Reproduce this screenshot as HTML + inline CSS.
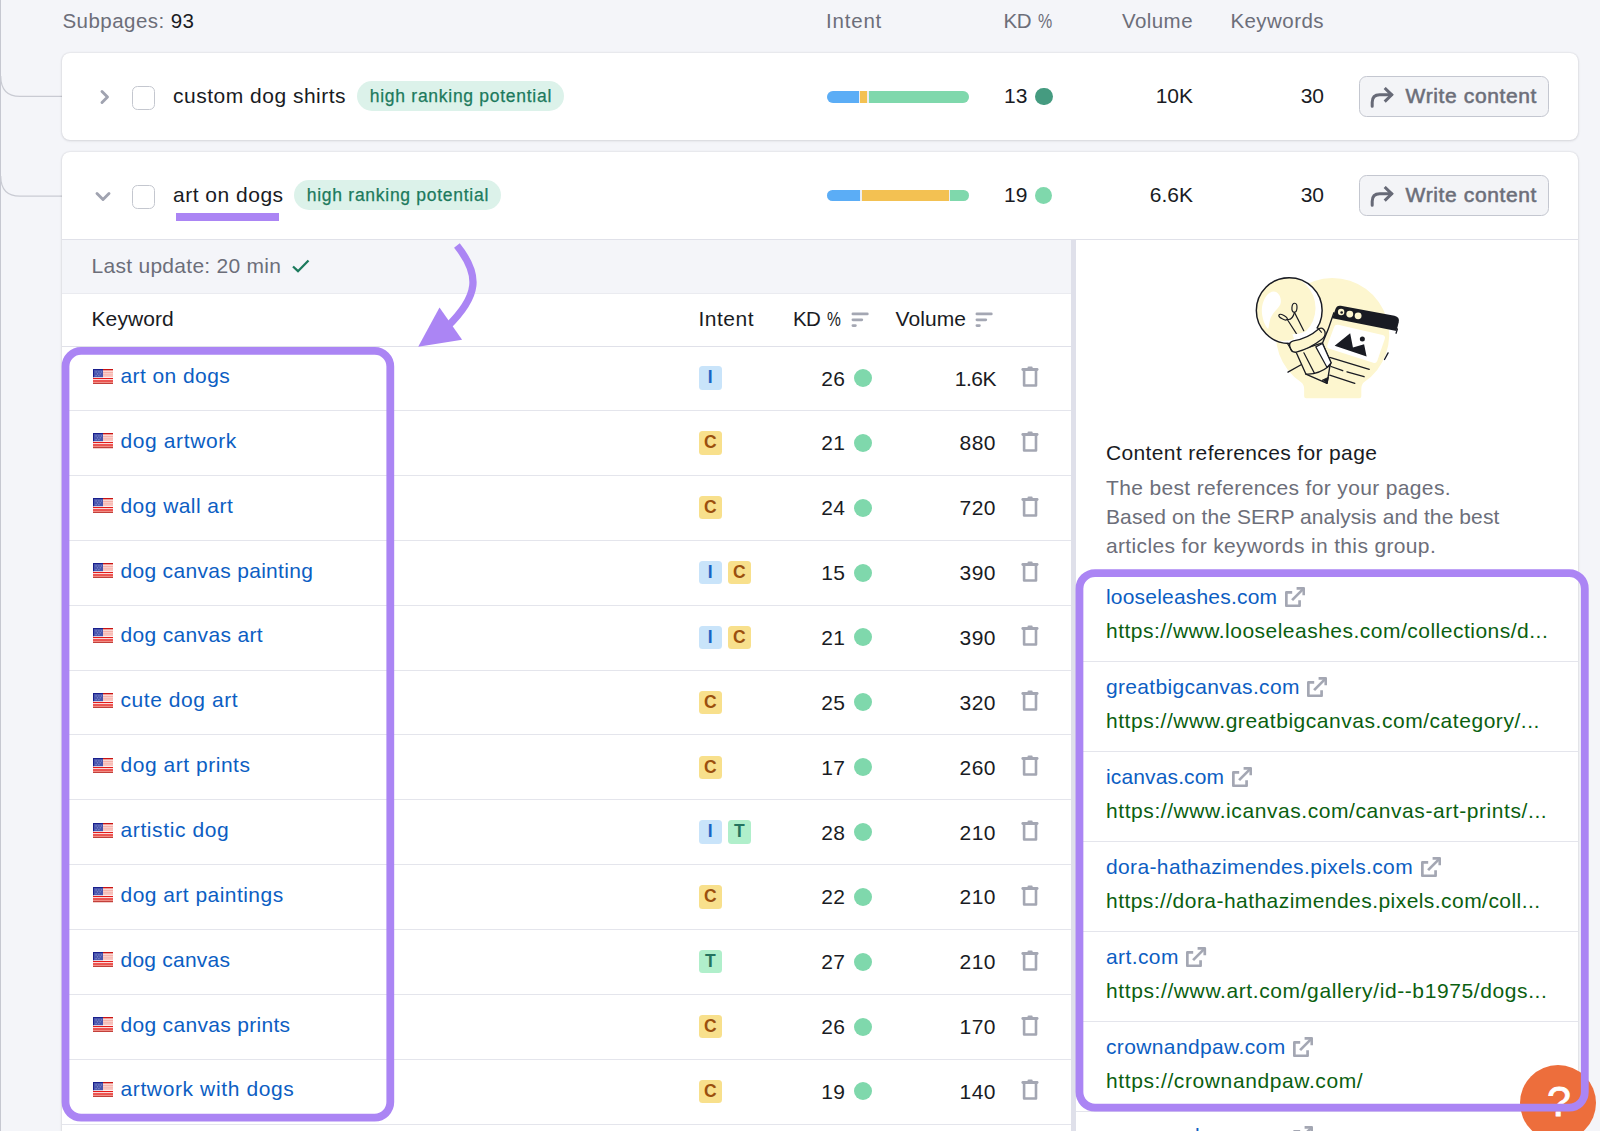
<!DOCTYPE html>
<html lang="en"><head><meta charset="utf-8"><title>Subpages</title>
<style>
*{box-sizing:border-box;margin:0;padding:0}
html,body{width:1600px;height:1131px;overflow:hidden}
body{background:#f4f5f9;font-family:"Liberation Sans",Arial,sans-serif;font-size:21px;color:#191b23;position:relative;letter-spacing:.3px}
.abs{position:absolute;white-space:nowrap}
.gray{color:#6c6e79}
.hdr{top:9px;line-height:24px;font-size:20.5px;letter-spacing:.45px}
.card{position:absolute;left:62px;width:1516px;background:#fff;border-radius:8px;box-shadow:0 0 2px rgba(25,27,35,.16),0 1px 3px rgba(25,27,35,.10)}
.chk{position:absolute;left:132px;width:22.8px;height:23.5px;border:1.3px solid #c4c7cf;border-radius:5.5px;background:#fff}
.title{position:absolute;left:173px;line-height:26px;letter-spacing:.5px}
.tag{position:absolute;height:30px;border-radius:15px;background:#dcf2ea;color:#1c7a5d;font-size:17.5px;line-height:30px;padding:0 0 0 12.8px;width:207px;letter-spacing:.72px;font-weight:400;-webkit-text-stroke:.25px #1c7a5d}
.bar{position:absolute;left:826.7px;width:142.3px;height:12px;border-radius:6px;overflow:hidden;display:flex;gap:1.6px;background:#eceef2}
.bar i{display:block;height:12.5px}
.num{position:absolute;line-height:26px;text-align:right;letter-spacing:0}
.dot{position:absolute;width:18px;height:18px;border-radius:50%;background:#7fd8ac}
.btn{position:absolute;left:1359px;width:190px;height:41px;border:1.3px solid #c4c7d0;border-radius:7.5px;background:#f3f4f7;color:#6c6e79;font-weight:400;letter-spacing:.62px;-webkit-text-stroke:.55px #6c6e79}
.btn span{position:absolute;left:45.6px;top:6.2px;line-height:26px;font-size:21px}
.btn svg{position:absolute;left:10px;top:9.5px}

.panelhead{position:absolute;left:62px;top:239px;width:1516px;height:1px;background:#e0e1e9}
.lastupd{position:absolute;left:62px;top:240px;width:1009px;height:53.6px;background:#f4f5f9;border-bottom:1px solid #eaebf0}
.lastupd span{position:absolute;left:29.5px;top:13px;line-height:26px;color:#6c6e79;letter-spacing:.28px}
.divider{position:absolute;left:1071px;top:240px;width:5px;height:900px;background:#dfe0ea}
.th{position:absolute;top:306px;line-height:26px;letter-spacing:.1px}
.thline{position:absolute;left:62px;top:346px;width:1009px;height:1px;background:#e0e1e9}
.row{position:absolute;left:62px;width:1009px;height:64.8px;border-bottom:1.2px solid #e4e5ec}
.row .flag{position:absolute;left:31px;top:22.2px}
.row .kw{position:absolute;left:58.5px;top:16.5px;line-height:26px;color:#0c5ec3;letter-spacing:.33px}
.in{position:absolute;top:20.1px;width:22.5px;height:23.2px;border-radius:3.5px;font-size:17.5px;line-height:23.6px;text-align:center;font-weight:700;letter-spacing:0}
.inI{background:#c9e4fa;color:#1a63c4}
.inC{background:#f8e08c;color:#9b4f0e}
.inT{background:#b0efcb;color:#24735e}
.kd{position:absolute;right:225.5px;top:19.2px;line-height:26px;letter-spacing:.5px;text-align:right}
.kdot{position:absolute;left:792px;top:22.6px;width:18px;height:18px;border-radius:50%;background:#7fd8ac}
.vol{position:absolute;right:75px;top:19.2px;line-height:26px;letter-spacing:.5px;text-align:right}
.trash{position:absolute;left:958.8px;top:19.5px}
.ref{position:absolute;left:1076px;width:502px;height:90px;border-bottom:1.2px solid #e4e5ec}
.ref .dl{position:absolute;left:30px;top:11.8px;height:26px;display:flex;align-items:flex-start}
.ref .dom{line-height:26px;color:#0c5ec3;letter-spacing:.2px}
.ref .ext{margin-left:7.6px;margin-top:3.1px}
.ref .url{position:absolute;left:30px;top:45.9px;line-height:26px;color:#0b5f10;letter-spacing:.48px}
.rt{position:absolute;left:1106px;line-height:29px;letter-spacing:.35px}
</style></head><body>

<!-- tree connectors -->
<div class="abs" style="left:.2px;top:0;width:1.1px;height:1131px;background:#c6c8d1"></div>
<svg class="abs" style="left:0;top:0" width="70" height="260" viewBox="0 0 70 260" fill="none" stroke="#c9cbd3" stroke-width="1.2">
<path d="M.75 76Q.75 96.4 20 96.4H62"/><path d="M.75 176Q.75 196.2 20 196.2H62"/>
</svg>

<div class="abs gray hdr" style="left:62.5px">Subpages: <span style="color:#191b23">93</span></div>
<div class="abs gray hdr" style="left:826px;letter-spacing:.8px">Intent</div>
<div class="abs gray hdr" style="left:1003.5px;letter-spacing:-.3px">KD <span style="display:inline-block;transform:scaleX(.78);transform-origin:0 50%;letter-spacing:0;margin-left:1.3px">%</span></div>
<div class="abs gray hdr" style="right:407px">Volume</div>
<div class="abs gray hdr" style="right:276px">Keywords</div>

<!-- card 1 -->
<div class="card" style="top:53px;height:87px"></div>
<svg class="abs" style="left:97px;top:85.5px" width="16" height="22" viewBox="0 0 16 22" fill="none" stroke="#a0a3b0" stroke-width="2.9" stroke-linecap="round" stroke-linejoin="round"><path d="M5 5.5l5.5 5.5L5 16.5"/></svg>
<div class="chk" style="top:86.3px"></div>
<div class="title" style="top:83px">custom dog shirts</div>
<div class="tag" style="left:357px;top:81.2px">high ranking potential</div>
<div class="bar" style="top:90.7px"><i style="width:32.2px;background:#5badf6"></i><i style="width:6.6px;background:#f3c152"></i><i style="flex:1;background:#7fd8ac"></i></div>
<div class="num" style="left:1004px;top:83px">13</div>
<div class="dot" style="left:1035px;top:87.6px;width:17.6px;height:17.6px;background:#459b80"></div>
<div class="num" style="right:407px;top:83px">10K</div>
<div class="num" style="right:276px;top:83px">30</div>
<div class="btn" style="top:76px"><svg width="26" height="22" viewBox="0 0 26 22" fill="none" stroke="#676a77" stroke-width="3"><path d="M2.2 19.2V15.3Q2.2 7.8 9.7 7.8H21.5" stroke-linecap="round"/><path d="M14.7 1L21.7 7.8L14.7 14.6" stroke-linejoin="miter"/></svg><span>Write content</span></div>

<!-- card 2 -->
<div class="card" style="top:152px;height:1000px"></div>
<svg class="abs" style="left:92.8px;top:186.3px" width="22" height="20" viewBox="0 0 22 20" fill="none" stroke="#a0a3b0" stroke-width="2.9" stroke-linecap="round" stroke-linejoin="round"><path d="M4 7.5l6 6 6-6"/></svg>
<div class="chk" style="top:185.2px"></div>
<div class="title" style="top:182px">art on dogs</div>
<div class="abs" style="left:176px;top:213.2px;width:103px;height:8px;background:#ab85f4"></div>
<div class="tag" style="left:294px;top:180.2px">high ranking potential</div>
<div class="bar" style="top:189.8px;height:11.4px"><i style="width:33.8px;background:#5badf6"></i><i style="width:86.8px;background:#f3c152"></i><i style="flex:1;background:#7fd8ac"></i></div>
<div class="num" style="left:1004px;top:182px">19</div>
<div class="dot" style="left:1035px;top:187px;width:17.4px;height:17.4px"></div>
<div class="num" style="right:407px;top:182px">6.6K</div>
<div class="num" style="right:276px;top:182px">30</div>
<div class="btn" style="top:175px"><svg width="26" height="22" viewBox="0 0 26 22" fill="none" stroke="#676a77" stroke-width="3"><path d="M2.2 19.2V15.3Q2.2 7.8 9.7 7.8H21.5" stroke-linecap="round"/><path d="M14.7 1L21.7 7.8L14.7 14.6" stroke-linejoin="miter"/></svg><span>Write content</span></div>


<!-- expanded panel -->
<div class="panelhead"></div>
<div class="lastupd"><span>Last update: 20 min</span>
<svg class="abs" style="left:229px;top:18px" width="20" height="16" viewBox="0 0 20 16" fill="none" stroke="#1c7a5d" stroke-width="2.3" stroke-linecap="butt" stroke-linejoin="miter"><path d="M2 8.5l5 4.7L17.5 2.5"/></svg></div>
<div class="divider"></div>
<div class="th" style="left:91.5px">Keyword</div>
<div class="th" style="left:698.5px;letter-spacing:.5px">Intent</div>
<div class="th" style="left:793px;letter-spacing:-.75px;font-size:20.5px">KD <span style="display:inline-block;transform:scaleX(.76);transform-origin:0 50%;letter-spacing:0;margin-left:2px">%</span></div>
<svg class="abs" style="left:851px;top:311.9px" width="19" height="16" viewBox="0 0 19 16" fill="none" stroke="#a4a7b3" stroke-width="2.75" stroke-linecap="round"><path d="M1.9 1.9H16.3M1.9 7.8H10.8M1.9 13.5H4.4"/></svg>
<div class="th" style="left:895.5px">Volume</div>
<svg class="abs" style="left:974.5px;top:311.9px" width="19" height="16" viewBox="0 0 19 16" fill="none" stroke="#a4a7b3" stroke-width="2.75" stroke-linecap="round"><path d="M1.9 1.9H16.3M1.9 7.8H10.8M1.9 13.5H4.4"/></svg>
<div class="thline"></div>

<!-- right panel -->
<div class="rt" style="top:438px;color:#191b23;letter-spacing:.36px">Content references for page</div>
<div class="rt gray" style="top:472.5px">The best references for your pages.</div>
<div class="rt gray" style="top:501.5px;letter-spacing:.1px">Based on the SERP analysis and the best</div>
<div class="rt gray" style="top:530.5px">articles for keywords in this group.</div>
<!-- ILLUS --><svg class="abs" style="left:1230px;top:260px" width="200" height="150" viewBox="0 0 1508 1131">
<defs><clipPath id="bulbclip"><circle cx="446.6" cy="381.4" r="248"/></clipPath></defs>
<g stroke-linecap="round" stroke-linejoin="round">
<path d="M770 135A430 430 0 0 1 1010 922Q990 940 990 975V1028Q990 1043 975 1043H574Q559 1043 559 1028V975Q559 940 536 922A430 430 0 0 1 770 135Z" fill="#fdf6cf"/>
<!-- browser window -->
<path d="M835 345L1240 420Q1282 430 1272 470L1255 535L772 440L795 370Q805 340 835 345Z" fill="#191b23"/>
<circle cx="838" cy="392" r="24" fill="#fdf6cf"/><circle cx="903" cy="408" r="26" fill="#fdf6cf"/><circle cx="966" cy="421" r="26" fill="#fdf6cf"/>
<circle cx="842" cy="396" r="10" fill="#191b23"/>
<path d="M815 488L1150 565Q1175 572 1167 595L1110 762Q1102 782 1080 775L745 668Q728 660 735 640L785 505Q793 484 815 488Z" fill="#fff"/>
<path d="M789 647L906 552L927 660L1011 635L1030 728Z" fill="#191b23"/>
<circle cx="998" cy="595" r="19" fill="#191b23"/>
<g fill="none" stroke="#191b23" stroke-width="10">
<path d="M783 398Q745 520 698 625"/>
<path d="M1262 520L1252 552"/><path d="M1192 700L1165 750"/>
<path d="M752 735L1050 825"/><path d="M762 803L850 835"/><path d="M882 843L1011 880"/><path d="M752 868L941 930"/>
<path d="M437 845L536 790"/>
</g>
<!-- bulb -->
<circle cx="446.6" cy="381.4" r="248" fill="#fff"/>
<g clip-path="url(#bulbclip)"><circle cx="396" cy="362" r="249" fill="#fdf6cf"/>
<path d="M328 238C365 238 388 280 383 320C378 360 330 380 305 440C295 470 295 500 288 520C262 500 238 430 240 375C242 310 280 240 328 238Z" fill="#fff"/></g>
<circle cx="446.6" cy="381.4" r="248" fill="none" stroke="#191b23" stroke-width="11"/>
<g fill="none" stroke="#191b23" stroke-width="9">
<ellipse cx="486" cy="360" rx="19" ry="34" transform="rotate(4 486 360)"/>
<ellipse cx="400" cy="431" rx="35" ry="14" transform="rotate(28 400 431)"/>
<path d="M433 448Q470 455 486 396"/>
<path d="M486 395L556 533"/><path d="M432 449L520 585"/>
<path d="M506 582L571 555"/>
</g>
<!-- pencil -->
<path d="M496 690L696 625L762 775L754 795L732 930L572 860Z" fill="#fdf6cf" stroke="#191b23" stroke-width="10"/>
<path d="M647 655L697 630L762 775L732 810Z" fill="#fff" stroke="#191b23" stroke-width="9"/>
<path d="M557 700L637 855" fill="none" stroke="#191b23" stroke-width="9"/>
<path d="M572 860Q660 868 754 795" fill="none" stroke="#191b23" stroke-width="10"/>
<path d="M697 905L742 885L732 930Z" fill="#191b23" stroke="#191b23" stroke-width="6"/>
<!-- collar -->
<path d="M470 560Q560 560 640 500L690 560Q600 640 500 640Z" fill="#fff"/>
<path d="M452 655Q440 620 478 610Q590 590 668 520Q700 500 716 540Q724 575 690 600Q600 670 500 695Q462 700 452 655Z" fill="#fdf6cf" stroke="#191b23" stroke-width="10"/>
<path d="M432 628L470 690" fill="none" stroke="#191b23" stroke-width="9"/>
<path d="M660 510L690 545" fill="none" stroke="#191b23" stroke-width="8"/>
</g></svg>
<!-- /ILLUS -->
<div class="row" style="top:346.4px"><svg class="flag" width="20" height="15.2" viewBox="0 0 20 15.2"><rect width="20" height="15.2" fill="#f5aaa3"/><rect width="20" height="1.1" fill="#c81414"/><g fill="#fbe3e0"><rect y="2.2" width="20" height=".9"/><rect y="4.4" width="20" height=".9"/><rect y="6.6" width="20" height=".9"/></g><rect y="8.2" width="20" height="1" fill="#fff"/><rect y="9.1" width="20" height="1.2" fill="#e30a0a"/><rect y="10.3" width="20" height="1.1" fill="#fff"/><rect y="11.4" width="20" height="1.3" fill="#e30a0a"/><rect y="12.7" width="20" height="1.3" fill="#f09089"/><rect y="14" width="20" height="1.2" fill="#c2403a"/><rect width="10" height="8.2" fill="#4a56ad"/><path d="M0 0h10v1H1v7.2H0z" fill="#1a1f8c"/><g fill="#7e88cc"><rect x="2.5" y="2.3" width="1.2" height="1.2"/><rect x="5.3" y="2.3" width="1.2" height="1.2"/><rect x="7.8" y="2.3" width="1.2" height="1.2"/><rect x="3.9" y="4.2" width="1.2" height="1.2"/><rect x="6.6" y="4.2" width="1.2" height="1.2"/><rect x="2.5" y="6" width="1.2" height="1.2"/><rect x="5.3" y="6" width="1.2" height="1.2"/></g></svg><a class="kw" style="letter-spacing:0.42px">art on dogs</a><b class="in inI" style="left:637px">I</b><span class="kd">26</span><i class="kdot"></i><span class="vol" style="letter-spacing:-.5px">1.6K</span><svg class="trash" width="18" height="22" viewBox="0 0 18 22" fill="none" stroke="#a4a7b3" stroke-width="2.6" stroke-linejoin="round" stroke-linecap="round"><path d="M3.1 4V19.5H15V4"/><path d="M1.8 3.5H16.1" stroke-width="2.8"/><path d="M7.6 1.7H10.6" stroke-width="2.2"/></svg></div>
<div class="row" style="top:411.3px"><svg class="flag" width="20" height="15.2" viewBox="0 0 20 15.2"><rect width="20" height="15.2" fill="#f5aaa3"/><rect width="20" height="1.1" fill="#c81414"/><g fill="#fbe3e0"><rect y="2.2" width="20" height=".9"/><rect y="4.4" width="20" height=".9"/><rect y="6.6" width="20" height=".9"/></g><rect y="8.2" width="20" height="1" fill="#fff"/><rect y="9.1" width="20" height="1.2" fill="#e30a0a"/><rect y="10.3" width="20" height="1.1" fill="#fff"/><rect y="11.4" width="20" height="1.3" fill="#e30a0a"/><rect y="12.7" width="20" height="1.3" fill="#f09089"/><rect y="14" width="20" height="1.2" fill="#c2403a"/><rect width="10" height="8.2" fill="#4a56ad"/><path d="M0 0h10v1H1v7.2H0z" fill="#1a1f8c"/><g fill="#7e88cc"><rect x="2.5" y="2.3" width="1.2" height="1.2"/><rect x="5.3" y="2.3" width="1.2" height="1.2"/><rect x="7.8" y="2.3" width="1.2" height="1.2"/><rect x="3.9" y="4.2" width="1.2" height="1.2"/><rect x="6.6" y="4.2" width="1.2" height="1.2"/><rect x="2.5" y="6" width="1.2" height="1.2"/><rect x="5.3" y="6" width="1.2" height="1.2"/></g></svg><a class="kw" style="letter-spacing:0.607px">dog artwork</a><b class="in inC" style="left:637px">C</b><span class="kd">21</span><i class="kdot"></i><span class="vol">880</span><svg class="trash" width="18" height="22" viewBox="0 0 18 22" fill="none" stroke="#a4a7b3" stroke-width="2.6" stroke-linejoin="round" stroke-linecap="round"><path d="M3.1 4V19.5H15V4"/><path d="M1.8 3.5H16.1" stroke-width="2.8"/><path d="M7.6 1.7H10.6" stroke-width="2.2"/></svg></div>
<div class="row" style="top:476.1px"><svg class="flag" width="20" height="15.2" viewBox="0 0 20 15.2"><rect width="20" height="15.2" fill="#f5aaa3"/><rect width="20" height="1.1" fill="#c81414"/><g fill="#fbe3e0"><rect y="2.2" width="20" height=".9"/><rect y="4.4" width="20" height=".9"/><rect y="6.6" width="20" height=".9"/></g><rect y="8.2" width="20" height="1" fill="#fff"/><rect y="9.1" width="20" height="1.2" fill="#e30a0a"/><rect y="10.3" width="20" height="1.1" fill="#fff"/><rect y="11.4" width="20" height="1.3" fill="#e30a0a"/><rect y="12.7" width="20" height="1.3" fill="#f09089"/><rect y="14" width="20" height="1.2" fill="#c2403a"/><rect width="10" height="8.2" fill="#4a56ad"/><path d="M0 0h10v1H1v7.2H0z" fill="#1a1f8c"/><g fill="#7e88cc"><rect x="2.5" y="2.3" width="1.2" height="1.2"/><rect x="5.3" y="2.3" width="1.2" height="1.2"/><rect x="7.8" y="2.3" width="1.2" height="1.2"/><rect x="3.9" y="4.2" width="1.2" height="1.2"/><rect x="6.6" y="4.2" width="1.2" height="1.2"/><rect x="2.5" y="6" width="1.2" height="1.2"/><rect x="5.3" y="6" width="1.2" height="1.2"/></g></svg><a class="kw" style="letter-spacing:0.442px">dog wall art</a><b class="in inC" style="left:637px">C</b><span class="kd">24</span><i class="kdot"></i><span class="vol">720</span><svg class="trash" width="18" height="22" viewBox="0 0 18 22" fill="none" stroke="#a4a7b3" stroke-width="2.6" stroke-linejoin="round" stroke-linecap="round"><path d="M3.1 4V19.5H15V4"/><path d="M1.8 3.5H16.1" stroke-width="2.8"/><path d="M7.6 1.7H10.6" stroke-width="2.2"/></svg></div>
<div class="row" style="top:541.0px"><svg class="flag" width="20" height="15.2" viewBox="0 0 20 15.2"><rect width="20" height="15.2" fill="#f5aaa3"/><rect width="20" height="1.1" fill="#c81414"/><g fill="#fbe3e0"><rect y="2.2" width="20" height=".9"/><rect y="4.4" width="20" height=".9"/><rect y="6.6" width="20" height=".9"/></g><rect y="8.2" width="20" height="1" fill="#fff"/><rect y="9.1" width="20" height="1.2" fill="#e30a0a"/><rect y="10.3" width="20" height="1.1" fill="#fff"/><rect y="11.4" width="20" height="1.3" fill="#e30a0a"/><rect y="12.7" width="20" height="1.3" fill="#f09089"/><rect y="14" width="20" height="1.2" fill="#c2403a"/><rect width="10" height="8.2" fill="#4a56ad"/><path d="M0 0h10v1H1v7.2H0z" fill="#1a1f8c"/><g fill="#7e88cc"><rect x="2.5" y="2.3" width="1.2" height="1.2"/><rect x="5.3" y="2.3" width="1.2" height="1.2"/><rect x="7.8" y="2.3" width="1.2" height="1.2"/><rect x="3.9" y="4.2" width="1.2" height="1.2"/><rect x="6.6" y="4.2" width="1.2" height="1.2"/><rect x="2.5" y="6" width="1.2" height="1.2"/><rect x="5.3" y="6" width="1.2" height="1.2"/></g></svg><a class="kw" style="letter-spacing:0.31px">dog canvas painting</a><b class="in inI" style="left:637px">I</b><b class="in inC" style="left:666px">C</b><span class="kd">15</span><i class="kdot"></i><span class="vol">390</span><svg class="trash" width="18" height="22" viewBox="0 0 18 22" fill="none" stroke="#a4a7b3" stroke-width="2.6" stroke-linejoin="round" stroke-linecap="round"><path d="M3.1 4V19.5H15V4"/><path d="M1.8 3.5H16.1" stroke-width="2.8"/><path d="M7.6 1.7H10.6" stroke-width="2.2"/></svg></div>
<div class="row" style="top:605.8px"><svg class="flag" width="20" height="15.2" viewBox="0 0 20 15.2"><rect width="20" height="15.2" fill="#f5aaa3"/><rect width="20" height="1.1" fill="#c81414"/><g fill="#fbe3e0"><rect y="2.2" width="20" height=".9"/><rect y="4.4" width="20" height=".9"/><rect y="6.6" width="20" height=".9"/></g><rect y="8.2" width="20" height="1" fill="#fff"/><rect y="9.1" width="20" height="1.2" fill="#e30a0a"/><rect y="10.3" width="20" height="1.1" fill="#fff"/><rect y="11.4" width="20" height="1.3" fill="#e30a0a"/><rect y="12.7" width="20" height="1.3" fill="#f09089"/><rect y="14" width="20" height="1.2" fill="#c2403a"/><rect width="10" height="8.2" fill="#4a56ad"/><path d="M0 0h10v1H1v7.2H0z" fill="#1a1f8c"/><g fill="#7e88cc"><rect x="2.5" y="2.3" width="1.2" height="1.2"/><rect x="5.3" y="2.3" width="1.2" height="1.2"/><rect x="7.8" y="2.3" width="1.2" height="1.2"/><rect x="3.9" y="4.2" width="1.2" height="1.2"/><rect x="6.6" y="4.2" width="1.2" height="1.2"/><rect x="2.5" y="6" width="1.2" height="1.2"/><rect x="5.3" y="6" width="1.2" height="1.2"/></g></svg><a class="kw" style="letter-spacing:0.331px">dog canvas art</a><b class="in inI" style="left:637px">I</b><b class="in inC" style="left:666px">C</b><span class="kd">21</span><i class="kdot"></i><span class="vol">390</span><svg class="trash" width="18" height="22" viewBox="0 0 18 22" fill="none" stroke="#a4a7b3" stroke-width="2.6" stroke-linejoin="round" stroke-linecap="round"><path d="M3.1 4V19.5H15V4"/><path d="M1.8 3.5H16.1" stroke-width="2.8"/><path d="M7.6 1.7H10.6" stroke-width="2.2"/></svg></div>
<div class="row" style="top:670.7px"><svg class="flag" width="20" height="15.2" viewBox="0 0 20 15.2"><rect width="20" height="15.2" fill="#f5aaa3"/><rect width="20" height="1.1" fill="#c81414"/><g fill="#fbe3e0"><rect y="2.2" width="20" height=".9"/><rect y="4.4" width="20" height=".9"/><rect y="6.6" width="20" height=".9"/></g><rect y="8.2" width="20" height="1" fill="#fff"/><rect y="9.1" width="20" height="1.2" fill="#e30a0a"/><rect y="10.3" width="20" height="1.1" fill="#fff"/><rect y="11.4" width="20" height="1.3" fill="#e30a0a"/><rect y="12.7" width="20" height="1.3" fill="#f09089"/><rect y="14" width="20" height="1.2" fill="#c2403a"/><rect width="10" height="8.2" fill="#4a56ad"/><path d="M0 0h10v1H1v7.2H0z" fill="#1a1f8c"/><g fill="#7e88cc"><rect x="2.5" y="2.3" width="1.2" height="1.2"/><rect x="5.3" y="2.3" width="1.2" height="1.2"/><rect x="7.8" y="2.3" width="1.2" height="1.2"/><rect x="3.9" y="4.2" width="1.2" height="1.2"/><rect x="6.6" y="4.2" width="1.2" height="1.2"/><rect x="2.5" y="6" width="1.2" height="1.2"/><rect x="5.3" y="6" width="1.2" height="1.2"/></g></svg><a class="kw" style="letter-spacing:0.558px">cute dog art</a><b class="in inC" style="left:637px">C</b><span class="kd">25</span><i class="kdot"></i><span class="vol">320</span><svg class="trash" width="18" height="22" viewBox="0 0 18 22" fill="none" stroke="#a4a7b3" stroke-width="2.6" stroke-linejoin="round" stroke-linecap="round"><path d="M3.1 4V19.5H15V4"/><path d="M1.8 3.5H16.1" stroke-width="2.8"/><path d="M7.6 1.7H10.6" stroke-width="2.2"/></svg></div>
<div class="row" style="top:735.6px"><svg class="flag" width="20" height="15.2" viewBox="0 0 20 15.2"><rect width="20" height="15.2" fill="#f5aaa3"/><rect width="20" height="1.1" fill="#c81414"/><g fill="#fbe3e0"><rect y="2.2" width="20" height=".9"/><rect y="4.4" width="20" height=".9"/><rect y="6.6" width="20" height=".9"/></g><rect y="8.2" width="20" height="1" fill="#fff"/><rect y="9.1" width="20" height="1.2" fill="#e30a0a"/><rect y="10.3" width="20" height="1.1" fill="#fff"/><rect y="11.4" width="20" height="1.3" fill="#e30a0a"/><rect y="12.7" width="20" height="1.3" fill="#f09089"/><rect y="14" width="20" height="1.2" fill="#c2403a"/><rect width="10" height="8.2" fill="#4a56ad"/><path d="M0 0h10v1H1v7.2H0z" fill="#1a1f8c"/><g fill="#7e88cc"><rect x="2.5" y="2.3" width="1.2" height="1.2"/><rect x="5.3" y="2.3" width="1.2" height="1.2"/><rect x="7.8" y="2.3" width="1.2" height="1.2"/><rect x="3.9" y="4.2" width="1.2" height="1.2"/><rect x="6.6" y="4.2" width="1.2" height="1.2"/><rect x="2.5" y="6" width="1.2" height="1.2"/><rect x="5.3" y="6" width="1.2" height="1.2"/></g></svg><a class="kw" style="letter-spacing:0.53px">dog art prints</a><b class="in inC" style="left:637px">C</b><span class="kd">17</span><i class="kdot"></i><span class="vol">260</span><svg class="trash" width="18" height="22" viewBox="0 0 18 22" fill="none" stroke="#a4a7b3" stroke-width="2.6" stroke-linejoin="round" stroke-linecap="round"><path d="M3.1 4V19.5H15V4"/><path d="M1.8 3.5H16.1" stroke-width="2.8"/><path d="M7.6 1.7H10.6" stroke-width="2.2"/></svg></div>
<div class="row" style="top:800.4px"><svg class="flag" width="20" height="15.2" viewBox="0 0 20 15.2"><rect width="20" height="15.2" fill="#f5aaa3"/><rect width="20" height="1.1" fill="#c81414"/><g fill="#fbe3e0"><rect y="2.2" width="20" height=".9"/><rect y="4.4" width="20" height=".9"/><rect y="6.6" width="20" height=".9"/></g><rect y="8.2" width="20" height="1" fill="#fff"/><rect y="9.1" width="20" height="1.2" fill="#e30a0a"/><rect y="10.3" width="20" height="1.1" fill="#fff"/><rect y="11.4" width="20" height="1.3" fill="#e30a0a"/><rect y="12.7" width="20" height="1.3" fill="#f09089"/><rect y="14" width="20" height="1.2" fill="#c2403a"/><rect width="10" height="8.2" fill="#4a56ad"/><path d="M0 0h10v1H1v7.2H0z" fill="#1a1f8c"/><g fill="#7e88cc"><rect x="2.5" y="2.3" width="1.2" height="1.2"/><rect x="5.3" y="2.3" width="1.2" height="1.2"/><rect x="7.8" y="2.3" width="1.2" height="1.2"/><rect x="3.9" y="4.2" width="1.2" height="1.2"/><rect x="6.6" y="4.2" width="1.2" height="1.2"/><rect x="2.5" y="6" width="1.2" height="1.2"/><rect x="5.3" y="6" width="1.2" height="1.2"/></g></svg><a class="kw" style="letter-spacing:0.613px">artistic dog</a><b class="in inI" style="left:637px">I</b><b class="in inT" style="left:666px">T</b><span class="kd">28</span><i class="kdot"></i><span class="vol">210</span><svg class="trash" width="18" height="22" viewBox="0 0 18 22" fill="none" stroke="#a4a7b3" stroke-width="2.6" stroke-linejoin="round" stroke-linecap="round"><path d="M3.1 4V19.5H15V4"/><path d="M1.8 3.5H16.1" stroke-width="2.8"/><path d="M7.6 1.7H10.6" stroke-width="2.2"/></svg></div>
<div class="row" style="top:865.3px"><svg class="flag" width="20" height="15.2" viewBox="0 0 20 15.2"><rect width="20" height="15.2" fill="#f5aaa3"/><rect width="20" height="1.1" fill="#c81414"/><g fill="#fbe3e0"><rect y="2.2" width="20" height=".9"/><rect y="4.4" width="20" height=".9"/><rect y="6.6" width="20" height=".9"/></g><rect y="8.2" width="20" height="1" fill="#fff"/><rect y="9.1" width="20" height="1.2" fill="#e30a0a"/><rect y="10.3" width="20" height="1.1" fill="#fff"/><rect y="11.4" width="20" height="1.3" fill="#e30a0a"/><rect y="12.7" width="20" height="1.3" fill="#f09089"/><rect y="14" width="20" height="1.2" fill="#c2403a"/><rect width="10" height="8.2" fill="#4a56ad"/><path d="M0 0h10v1H1v7.2H0z" fill="#1a1f8c"/><g fill="#7e88cc"><rect x="2.5" y="2.3" width="1.2" height="1.2"/><rect x="5.3" y="2.3" width="1.2" height="1.2"/><rect x="7.8" y="2.3" width="1.2" height="1.2"/><rect x="3.9" y="4.2" width="1.2" height="1.2"/><rect x="6.6" y="4.2" width="1.2" height="1.2"/><rect x="2.5" y="6" width="1.2" height="1.2"/><rect x="5.3" y="6" width="1.2" height="1.2"/></g></svg><a class="kw" style="letter-spacing:0.46px">dog art paintings</a><b class="in inC" style="left:637px">C</b><span class="kd">22</span><i class="kdot"></i><span class="vol">210</span><svg class="trash" width="18" height="22" viewBox="0 0 18 22" fill="none" stroke="#a4a7b3" stroke-width="2.6" stroke-linejoin="round" stroke-linecap="round"><path d="M3.1 4V19.5H15V4"/><path d="M1.8 3.5H16.1" stroke-width="2.8"/><path d="M7.6 1.7H10.6" stroke-width="2.2"/></svg></div>
<div class="row" style="top:930.1px"><svg class="flag" width="20" height="15.2" viewBox="0 0 20 15.2"><rect width="20" height="15.2" fill="#f5aaa3"/><rect width="20" height="1.1" fill="#c81414"/><g fill="#fbe3e0"><rect y="2.2" width="20" height=".9"/><rect y="4.4" width="20" height=".9"/><rect y="6.6" width="20" height=".9"/></g><rect y="8.2" width="20" height="1" fill="#fff"/><rect y="9.1" width="20" height="1.2" fill="#e30a0a"/><rect y="10.3" width="20" height="1.1" fill="#fff"/><rect y="11.4" width="20" height="1.3" fill="#e30a0a"/><rect y="12.7" width="20" height="1.3" fill="#f09089"/><rect y="14" width="20" height="1.2" fill="#c2403a"/><rect width="10" height="8.2" fill="#4a56ad"/><path d="M0 0h10v1H1v7.2H0z" fill="#1a1f8c"/><g fill="#7e88cc"><rect x="2.5" y="2.3" width="1.2" height="1.2"/><rect x="5.3" y="2.3" width="1.2" height="1.2"/><rect x="7.8" y="2.3" width="1.2" height="1.2"/><rect x="3.9" y="4.2" width="1.2" height="1.2"/><rect x="6.6" y="4.2" width="1.2" height="1.2"/><rect x="2.5" y="6" width="1.2" height="1.2"/><rect x="5.3" y="6" width="1.2" height="1.2"/></g></svg><a class="kw" style="letter-spacing:0.228px">dog canvas</a><b class="in inT" style="left:637px">T</b><span class="kd">27</span><i class="kdot"></i><span class="vol">210</span><svg class="trash" width="18" height="22" viewBox="0 0 18 22" fill="none" stroke="#a4a7b3" stroke-width="2.6" stroke-linejoin="round" stroke-linecap="round"><path d="M3.1 4V19.5H15V4"/><path d="M1.8 3.5H16.1" stroke-width="2.8"/><path d="M7.6 1.7H10.6" stroke-width="2.2"/></svg></div>
<div class="row" style="top:995.0px"><svg class="flag" width="20" height="15.2" viewBox="0 0 20 15.2"><rect width="20" height="15.2" fill="#f5aaa3"/><rect width="20" height="1.1" fill="#c81414"/><g fill="#fbe3e0"><rect y="2.2" width="20" height=".9"/><rect y="4.4" width="20" height=".9"/><rect y="6.6" width="20" height=".9"/></g><rect y="8.2" width="20" height="1" fill="#fff"/><rect y="9.1" width="20" height="1.2" fill="#e30a0a"/><rect y="10.3" width="20" height="1.1" fill="#fff"/><rect y="11.4" width="20" height="1.3" fill="#e30a0a"/><rect y="12.7" width="20" height="1.3" fill="#f09089"/><rect y="14" width="20" height="1.2" fill="#c2403a"/><rect width="10" height="8.2" fill="#4a56ad"/><path d="M0 0h10v1H1v7.2H0z" fill="#1a1f8c"/><g fill="#7e88cc"><rect x="2.5" y="2.3" width="1.2" height="1.2"/><rect x="5.3" y="2.3" width="1.2" height="1.2"/><rect x="7.8" y="2.3" width="1.2" height="1.2"/><rect x="3.9" y="4.2" width="1.2" height="1.2"/><rect x="6.6" y="4.2" width="1.2" height="1.2"/><rect x="2.5" y="6" width="1.2" height="1.2"/><rect x="5.3" y="6" width="1.2" height="1.2"/></g></svg><a class="kw" style="letter-spacing:0.311px">dog canvas prints</a><b class="in inC" style="left:637px">C</b><span class="kd">26</span><i class="kdot"></i><span class="vol">170</span><svg class="trash" width="18" height="22" viewBox="0 0 18 22" fill="none" stroke="#a4a7b3" stroke-width="2.6" stroke-linejoin="round" stroke-linecap="round"><path d="M3.1 4V19.5H15V4"/><path d="M1.8 3.5H16.1" stroke-width="2.8"/><path d="M7.6 1.7H10.6" stroke-width="2.2"/></svg></div>
<div class="row" style="top:1059.9px"><svg class="flag" width="20" height="15.2" viewBox="0 0 20 15.2"><rect width="20" height="15.2" fill="#f5aaa3"/><rect width="20" height="1.1" fill="#c81414"/><g fill="#fbe3e0"><rect y="2.2" width="20" height=".9"/><rect y="4.4" width="20" height=".9"/><rect y="6.6" width="20" height=".9"/></g><rect y="8.2" width="20" height="1" fill="#fff"/><rect y="9.1" width="20" height="1.2" fill="#e30a0a"/><rect y="10.3" width="20" height="1.1" fill="#fff"/><rect y="11.4" width="20" height="1.3" fill="#e30a0a"/><rect y="12.7" width="20" height="1.3" fill="#f09089"/><rect y="14" width="20" height="1.2" fill="#c2403a"/><rect width="10" height="8.2" fill="#4a56ad"/><path d="M0 0h10v1H1v7.2H0z" fill="#1a1f8c"/><g fill="#7e88cc"><rect x="2.5" y="2.3" width="1.2" height="1.2"/><rect x="5.3" y="2.3" width="1.2" height="1.2"/><rect x="7.8" y="2.3" width="1.2" height="1.2"/><rect x="3.9" y="4.2" width="1.2" height="1.2"/><rect x="6.6" y="4.2" width="1.2" height="1.2"/><rect x="2.5" y="6" width="1.2" height="1.2"/><rect x="5.3" y="6" width="1.2" height="1.2"/></g></svg><a class="kw" style="letter-spacing:0.617px">artwork with dogs</a><b class="in inC" style="left:637px">C</b><span class="kd">19</span><i class="kdot"></i><span class="vol">140</span><svg class="trash" width="18" height="22" viewBox="0 0 18 22" fill="none" stroke="#a4a7b3" stroke-width="2.6" stroke-linejoin="round" stroke-linecap="round"><path d="M3.1 4V19.5H15V4"/><path d="M1.8 3.5H16.1" stroke-width="2.8"/><path d="M7.6 1.7H10.6" stroke-width="2.2"/></svg></div>
<div class="ref" style="top:572.1px"><div class="dl"><a class="dom" style="letter-spacing:0.194px">looseleashes.com</a><svg class="ext" width="20.2" height="20.2" viewBox="0 0 20.2 20.2" fill="none" stroke="#a4a7b3" stroke-width="2.7" stroke-linejoin="round"><path d="M7.2 5.45H1.35V18.75H14.6V13.3"/><path d="M11.6 1.35H18.8V8.2"/><path d="M18.3 1.9L7.1 13.1"/></svg></div><div class="url" style="letter-spacing:0.489px">https://www.looseleashes.com/collections/d...</div></div>
<div class="ref" style="top:662.1px"><div class="dl"><a class="dom" style="letter-spacing:0.32px">greatbigcanvas.com</a><svg class="ext" width="20.2" height="20.2" viewBox="0 0 20.2 20.2" fill="none" stroke="#a4a7b3" stroke-width="2.7" stroke-linejoin="round"><path d="M7.2 5.45H1.35V18.75H14.6V13.3"/><path d="M11.6 1.35H18.8V8.2"/><path d="M18.3 1.9L7.1 13.1"/></svg></div><div class="url" style="letter-spacing:0.536px">https://www.greatbigcanvas.com/category/...</div></div>
<div class="ref" style="top:752.1px"><div class="dl"><a class="dom" style="letter-spacing:0.135px">icanvas.com</a><svg class="ext" width="20.2" height="20.2" viewBox="0 0 20.2 20.2" fill="none" stroke="#a4a7b3" stroke-width="2.7" stroke-linejoin="round"><path d="M7.2 5.45H1.35V18.75H14.6V13.3"/><path d="M11.6 1.35H18.8V8.2"/><path d="M18.3 1.9L7.1 13.1"/></svg></div><div class="url" style="letter-spacing:0.572px">https://www.icanvas.com/canvas-art-prints/...</div></div>
<div class="ref" style="top:842.1px"><div class="dl"><a class="dom" style="letter-spacing:0.363px">dora-hathazimendes.pixels.com</a><svg class="ext" width="20.2" height="20.2" viewBox="0 0 20.2 20.2" fill="none" stroke="#a4a7b3" stroke-width="2.7" stroke-linejoin="round"><path d="M7.2 5.45H1.35V18.75H14.6V13.3"/><path d="M11.6 1.35H18.8V8.2"/><path d="M18.3 1.9L7.1 13.1"/></svg></div><div class="url" style="letter-spacing:0.449px">https://dora-hathazimendes.pixels.com/coll...</div></div>
<div class="ref" style="top:932.1px"><div class="dl"><a class="dom" style="letter-spacing:0.398px">art.com</a><svg class="ext" width="20.2" height="20.2" viewBox="0 0 20.2 20.2" fill="none" stroke="#a4a7b3" stroke-width="2.7" stroke-linejoin="round"><path d="M7.2 5.45H1.35V18.75H14.6V13.3"/><path d="M11.6 1.35H18.8V8.2"/><path d="M18.3 1.9L7.1 13.1"/></svg></div><div class="url" style="letter-spacing:0.603px">https://www.art.com/gallery/id--b1975/dogs...</div></div>
<div class="ref" style="top:1022.1px"><div class="dl"><a class="dom" style="letter-spacing:0.371px">crownandpaw.com</a><svg class="ext" width="20.2" height="20.2" viewBox="0 0 20.2 20.2" fill="none" stroke="#a4a7b3" stroke-width="2.7" stroke-linejoin="round"><path d="M7.2 5.45H1.35V18.75H14.6V13.3"/><path d="M11.6 1.35H18.8V8.2"/><path d="M18.3 1.9L7.1 13.1"/></svg></div><div class="url" style="letter-spacing:0.604px">https://crownandpaw.com/</div></div>
<div class="ref" style="top:1111.4px"><div class="dl"><a class="dom" style="letter-spacing:0.371px">crownandpaw.com</a><svg class="ext" width="20.2" height="20.2" viewBox="0 0 20.2 20.2" fill="none" stroke="#a4a7b3" stroke-width="2.7" stroke-linejoin="round"><path d="M7.2 5.45H1.35V18.75H14.6V13.3"/><path d="M11.6 1.35H18.8V8.2"/><path d="M18.3 1.9L7.1 13.1"/></svg></div></div>

<!-- annotations -->
<svg class="abs" style="left:0;top:0" width="1600" height="1131" viewBox="0 0 1600 1131" fill="none" stroke="#ab85f4" stroke-width="7.8"><rect x="65.5" y="350.9" width="324.8" height="766.8" rx="15.6"/></svg>
<div class="abs" style="left:1520px;top:1064.7px;width:76px;height:76px;border-radius:50%;background:#ed6e3c"></div>
<div class="abs" style="left:1546.9px;top:1076.2px;font-size:43px;line-height:50px;color:#fff;font-weight:400;letter-spacing:0;-webkit-text-stroke:.8px #fff">?</div>
<svg class="abs" style="left:0;top:0" width="1600" height="1131" viewBox="0 0 1600 1131" fill="none" stroke="#ab85f4" stroke-width="7.8"><rect x="1079.45" y="573.05" width="505.35" height="534.65" rx="15.6"/></svg>
<svg class="abs" style="left:400px;top:235px" width="90" height="120" viewBox="400 235 90 120"><path d="M456.9 245.5C480.5 275 479 296 447 327" fill="none" stroke="#ab85f4" stroke-width="7.3"/><path d="M418.2 346.7L439.5 307.6L462.1 339.8Z" fill="#ab85f4"/></svg>
</body></html>
